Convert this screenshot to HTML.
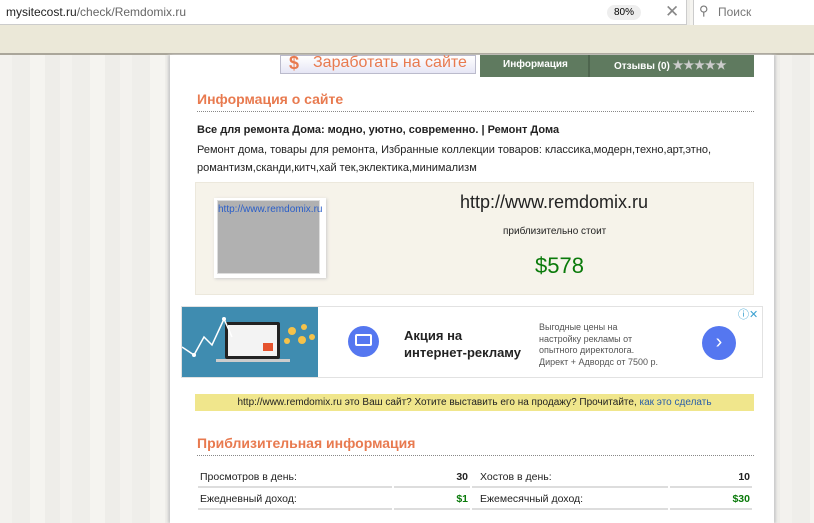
<!DOCTYPE html>
<html><head><meta charset="utf-8">
<style>
*{margin:0;padding:0;box-sizing:border-box}
body{width:814px;height:523px;overflow:hidden;position:relative;font-family:"Liberation Sans",Arial,sans-serif;background:repeating-linear-gradient(90deg,#f3f2ee 0 12px,#efeeea 12px 30px,#f5f4f0 30px 45px,#eeede9 45px 60px);}
.a{position:absolute}
.url{left:0;top:0;width:686px;height:25px;background:#fff;border-bottom:1px solid #ccc}
.bar{left:0;top:25px;width:814px;height:30px;background:#ebe8d8;border-bottom:2px solid #aaa69a}
.col{left:170px;top:55px;width:604px;height:468px;background:#fff;box-shadow:-2px 0 2px #ccc,2px 0 2px #ccc}
h2{position:absolute;color:#e87a4f;font-size:14px;font-weight:bold;left:197px;width:557px;border-bottom:1px dotted #888;padding-bottom:4px}
.t{font-size:11px;color:#222}
td{font-size:10.5px;color:#222;padding:5px 2px 3px;border-bottom:2px solid #ddd}
</style></head><body>
<div class="a url"></div>
<div class="a" style="left:6px;top:5px;font-size:12px;color:#222">mysitecost.ru<span style="color:#666">/check/Remdomix.ru</span></div>
<div class="a" style="left:607px;top:5px;width:34px;height:15px;border-radius:8px;background:#eee;font-size:10px;text-align:center;line-height:15px">80%</div>
<div class="a" style="left:665px;top:2px;font-size:17px;color:#888">✕</div>
<div class="a" style="left:686px;top:0;width:1px;height:25px;background:#ccc"></div>
<div class="a" style="left:693px;top:0;width:121px;height:25px;background:#fff;border-left:1px solid #ccc"></div>
<div class="a" style="left:699px;top:3px;font-size:13px;color:#777">⚲</div>
<div class="a" style="left:718px;top:5px;font-size:12px;color:#777">Поиск</div>
<div class="a bar"></div>
<div class="a col"></div>
<div class="a" style="left:280px;top:55px;width:196px;height:19px;background:linear-gradient(#fff,#e6e6f5);border:1px solid #bbc"></div>
<div class="a" style="left:289px;top:53px;font-size:18px;color:#e87a4f;font-weight:bold">$</div>
<div class="a" style="left:313px;top:54px;font-size:16px;color:#e87a4f">Заработать на сайте</div>
<div class="a" style="left:480px;top:55px;width:274px;height:22px;background:#5f7a5f"></div>
<div class="a" style="left:588px;top:55px;width:2px;height:22px;background:#4e654e"></div>
<div class="a" style="left:503px;top:59px;font-size:10px;color:#fff;font-weight:bold">Информация</div>
<div class="a" style="left:614px;top:58px;font-size:10px;color:#fff;font-weight:bold">Отзывы (0) <span style="color:#ccc;font-size:12px">★★★★★</span></div>
<h2 style="top:91px">Информация о сайте</h2>
<div class="a t" style="left:197px;top:124px;font-weight:bold">Все для ремонта Дома: модно, уютно, современно. | Ремонт Дома</div>
<div class="a t" style="left:197px;top:141px;line-height:18px;width:560px">Ремонт дома, товары для ремонта, Избранные коллекции товаров: классика,модерн,техно,арт,этно, романтизм,сканди,китч,хай тек,эклектика,минимализм</div>
<div class="a" style="left:195px;top:182px;width:559px;height:113px;background:#f6f3ea;border:1px solid #ece8dc"></div>
<div class="a" style="left:214px;top:198px;width:112px;height:80px;background:#fff;box-shadow:1px 1px 3px #ccc"></div>
<div class="a" style="left:217px;top:200px;width:103px;height:74px;background:#b1b1b1;border:1px solid #ddd"></div>
<div class="a" style="left:218px;top:204px;font-size:10px;color:#2a5ec8">http://www.remdomix.ru</div>
<div class="a" style="left:460px;top:192px;font-size:18px;color:#222">http://www.remdomix.ru</div>
<div class="a" style="left:503px;top:226px;font-size:10px;color:#222">приблизительно стоит</div>
<div class="a" style="left:535px;top:253px;font-size:22px;color:#0a7a0a">$578</div>
<div class="a" style="left:181px;top:306px;width:582px;height:72px;border:1px solid #e2e2e2;background:#fff"></div>
<div class="a" style="left:182px;top:307px;width:136px;height:70px;background:#3f8cb0"></div>
<div class="a" style="left:225px;top:322px;width:55px;height:37px;background:#222;border-radius:2px"></div>
<div class="a" style="left:228px;top:325px;width:49px;height:31px;background:#f3f3f3"></div>
<div class="a" style="left:263px;top:343px;width:10px;height:8px;background:#e5532e"></div>
<div class="a" style="left:216px;top:359px;width:74px;height:3px;background:#ccc"></div>
<svg class="a" style="left:182px;top:307px" width="136" height="70"><polyline points="0,40 12,48 22,30 30,38 42,12 50,30" fill="none" stroke="#fff" stroke-width="1.5"/><circle cx="42" cy="12" r="2" fill="#fff"/><circle cx="12" cy="48" r="2" fill="#fff"/><g fill="#f5c24a"><circle cx="110" cy="24" r="4"/><circle cx="122" cy="20" r="3"/><circle cx="120" cy="33" r="4"/><circle cx="130" cy="30" r="3"/><circle cx="105" cy="34" r="3"/></g></svg>
<div class="a" style="left:348px;top:326px;width:31px;height:31px;border-radius:50%;background:#5577f0"></div>
<div class="a" style="left:355px;top:334px;width:17px;height:12px;border:2px solid #fff;border-radius:2px"></div>
<div class="a" style="left:404px;top:327px;font-size:13px;font-weight:bold;color:#222;line-height:17px">Акция на<br>интернет-рекламу</div>
<div class="a" style="left:539px;top:322px;font-size:9px;color:#555;line-height:11.5px">Выгодные цены на<br>настройку рекламы от<br>опытного директолога.<br>Директ + Адвордс от 7500 р.</div>
<div class="a" style="left:702px;top:326px;width:34px;height:34px;border-radius:50%;background:#5577f0;color:#fff;font-size:20px;text-align:center;line-height:32px">›</div>
<div class="a" style="left:738px;top:306px;font-size:11px;color:#3aa0d0">ⓘ✕</div>
<div class="a" style="left:195px;top:394px;width:559px;height:17px;background:#f0e68c;font-size:10px;text-align:center;line-height:17px;color:#222">http://www.remdomix.ru это Ваш сайт? Хотите выставить его на продажу? Прочитайте, <span style="color:#2a5ea8">как это сделать</span></div>
<h2 style="top:435px">Приблизительная информация</h2>
<table class="a" style="left:196px;top:466px;width:558px;border-collapse:separate;border-spacing:2px 0;table-layout:fixed">
<tr><td style="width:194px">Просмотров в день:</td><td style="text-align:right;width:76px;font-weight:bold">30</td><td style="width:196px;padding-left:8px">Хостов в день:</td><td style="text-align:right;font-weight:bold">10</td></tr>
<tr><td>Ежедневный доход:</td><td style="text-align:right;color:#0a7a0a;font-weight:bold">$1</td><td style="padding-left:8px">Ежемесячный доход:</td><td style="text-align:right;color:#0a7a0a;font-weight:bold">$30</td></tr>
</table>
</body></html>
